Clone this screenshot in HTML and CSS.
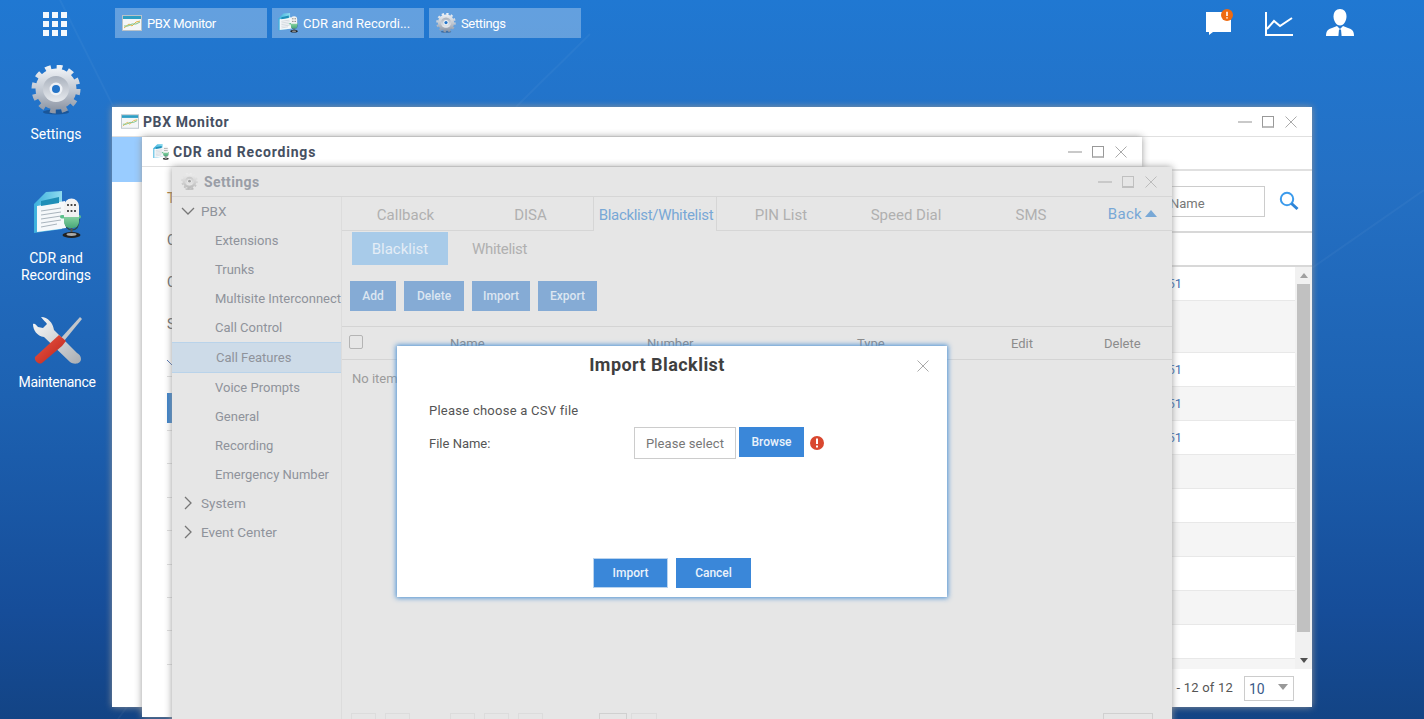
FILE: index.html
```html
<!DOCTYPE html>
<html lang="en">
<head>
<meta charset="utf-8">
<title>PBX Desktop</title>
<link rel="stylesheet" href="styles.css">
</head>
<body>
<svg class="defs" aria-hidden="true">
  <defs>
    <linearGradient id="steel" x1="0" y1="0" x2="0" y2="1"><stop offset="0" stop-color="#eef1f5"/><stop offset=".55" stop-color="#bfc6d0"/><stop offset="1" stop-color="#8f97a5"/></linearGradient>
    <linearGradient id="steelIn" x1="0" y1="0" x2="0" y2="1"><stop offset="0" stop-color="#a9b1bd"/><stop offset="1" stop-color="#e8ebef"/></linearGradient>
    <linearGradient id="mic" x1="0" y1="0" x2="0" y2="1"><stop offset="0" stop-color="#a5e6b4"/><stop offset="1" stop-color="#48a878"/></linearGradient>
    <linearGradient id="page" x1="0" y1="0" x2="1" y2="0"><stop offset="0" stop-color="#3cb0dc"/><stop offset="1" stop-color="#8fdcf0"/></linearGradient>
    <linearGradient id="metal" x1="0" y1="0" x2="1" y2="1"><stop offset="0" stop-color="#fafafa"/><stop offset="1" stop-color="#a9adb2"/></linearGradient>
    <linearGradient id="red" x1="0" y1="0" x2="1" y2="1"><stop offset="0" stop-color="#ee5a45"/><stop offset="1" stop-color="#b8201a"/></linearGradient>
    <symbol id="gear" viewBox="0 0 50 50">
      <ellipse cx="25" cy="47" rx="13" ry="2.5" fill="#10345f" opacity=".45"/>
      <circle cx="25" cy="24" r="22" fill="none" stroke="url(#steel)" stroke-width="5" stroke-dasharray="5.76 5.76"/>
      <circle cx="25" cy="24" r="20.5" fill="url(#steel)"/>
      <circle cx="25" cy="24" r="13" fill="url(#steelIn)"/>
      <circle cx="25" cy="24" r="6.5" fill="#eef1f5"/>
      <circle cx="25" cy="24" r="4" fill="#2474c8"/>
    </symbol>
    <symbol id="cdr" viewBox="0 0 48 48">
      <path d="M1 13 L13 1 L29 0 L29 38 L1 42Z" fill="url(#page)"/>
      <path d="M4 15 L32 10 L33 37 L4 41Z" fill="#f5f8fa"/>
      <path d="M8 10 L26 6 L26 12 L8 15Z" fill="#1f8fb8"/>
      <path d="M8 20 L28 17 M8 24 L28 21 M8 28 L28 25 M8 32 L28 29 M8 36 L24 33" stroke="#a9b4bd" stroke-width="1"/>
      <path d="M32 28 Q32 39 39 39 Q46 39 46 28" fill="none" stroke="#2c4a48" stroke-width="1.2"/>
      <rect x="27" y="24" width="5" height="3.500" rx="1.700" fill="#5cc08c"/><rect x="44" y="24" width="4" height="3.500" rx="1.700" fill="#5cc08c"/>
      <rect x="31" y="20" width="15" height="17" rx="6" fill="url(#mic)"/>
      <path d="M31 26 V15 a7.500 7.500 0 0 1 15 0 V26Z" fill="#f2f2f2"/>
      <path d="M35 13v2M38.500 13v2M42 13v2M35 19v2M38.500 19v2M42 19v2" stroke="#444" stroke-width="1.800"/>
      <path d="M38.500 37v4" stroke="#555" stroke-width="2"/>
      <ellipse cx="38.500" cy="44" rx="9" ry="3" fill="#222"/><ellipse cx="38.500" cy="43.500" rx="5" ry="1.400" fill="#aaa"/>
    </symbol>
    <symbol id="tools" viewBox="0 0 50 50">
      <path d="M1 8 C1 14 5 20 12 21 L38 46 C42 49 49 48 49 43 C49 40 47 38 45 37 L22 14 C21 7 16 1 9 1 C11 4 14 6 15 8 L11 12 L6 11 C4 9 3 7 1 8Z" fill="url(#metal)"/>
      <path d="M29 22 L48 1 L50 3 L32 25Z" fill="#c3c6ca"/>
      <path d="M27 19 L34 25 L30 30 L10 47 C7 49 2 45 3 41Z" fill="url(#red)"/>
    </symbol>
    <symbol id="monitor" viewBox="0 0 20 16">
      <rect x=".5" y=".5" width="19" height="15" fill="#f4f6f7" stroke="#b9c2c9"/>
      <rect x="1" y="1" width="18" height="3" fill="#2f9fc4"/>
      <path d="M2 13 L7 9 L10 11 L14 7 L18 6" fill="none" stroke="#e6b54a" stroke-width="1"/>
      <path d="M2 11 L6 11 L10 9 L14 9 L18 7" fill="none" stroke="#7cc48a" stroke-width="1"/>
    </symbol>
    <symbol id="winClose" viewBox="0 0 12 12"><path d="M.5.5l11 11M11.5.5l-11 11" stroke="currentColor" fill="none"/></symbol>
  </defs>
</svg>

<div class="desktop">
  <svg class="wallpaper" viewBox="0 0 1424 719" aria-hidden="true">
    <path d="M60 0 L116 112 M516 107 L590 34 M1312 268 L1424 190 M118 719 L132 700" stroke="#fff" stroke-opacity=".04" stroke-width="2" fill="none"/>
  </svg>

  <header class="topbar">
    <div class="launcher"><i></i><i></i><i></i><i></i><i></i><i></i><i></i><i></i><i></i></div>
    <nav class="tasks">
      <div class="task"><svg class="task-icon"><use href="#monitor"/></svg><span>PBX Monitor</span></div>
      <div class="task task-wide"><svg class="task-icon"><use href="#cdr"/></svg><span>CDR and Recordi...</span></div>
      <div class="task"><svg class="task-icon"><use href="#gear"/></svg><span>Settings</span></div>
    </nav>
    <div class="status-icons">
      <svg class="st-chat" viewBox="0 0 28 26">
        <path d="M1 3h25v20H8l-4 3v-3H1z" fill="#fff"/>
        <circle cx="22" cy="6" r="6" fill="#ef6a10"/>
        <path d="M22 2.800v4.200M22 8.200v1.400" stroke="#fff" stroke-width="1.600"/>
      </svg>
      <svg class="st-chart" viewBox="0 0 28 24">
        <path d="M1 0v23h27" fill="none" stroke="#fff" stroke-width="2"/>
        <path d="M2 17l7-8 6 5 12-8" fill="none" stroke="#fff" stroke-width="2"/>
      </svg>
      <svg class="st-user" viewBox="0 0 28 28">
        <path d="M14 0c4 0 6.500 3 6.500 7.500 0 4-2.500 9-6.500 9s-6.500-5-6.500-9C7.500 3 10 0 14 0z" fill="#fff"/>
        <path d="M0 27c0-5 2-7 6-8l5-2 3 3 3-3 5 2c4 1 6 3 6 8z" fill="#fff"/>
        <path d="M13 20.500h2l.6 6.500h-3.200z" fill="#2475c8"/>
      </svg>
    </div>
  </header>

  <aside class="shortcuts">
    <div class="shortcut sc-settings"><svg class="sc-gear"><use href="#gear"/></svg><span>Settings</span></div>
    <div class="shortcut sc-cdr"><svg class="sc-doc"><use href="#cdr"/></svg><span>CDR and<br>Recordings</span></div>
    <div class="shortcut sc-maint"><svg class="sc-tools"><use href="#tools"/></svg><span>Maintenance</span></div>
  </aside>

  <section class="window win-pbx">
    <div class="win-title">
      <svg class="title-icon"><use href="#monitor"/></svg>
      <h2>PBX Monitor</h2>
      <div class="win-controls"><b class="c-min"></b><b class="c-max"></b><svg class="c-close"><use href="#winClose"/></svg></div>
    </div>
    <div class="pbx-body">
      <div class="pbx-side"><div class="pbx-side-active"></div></div>
      <div class="pbx-main">
        <div class="pbx-tabs"></div>
        <div class="pbx-search">
          <div class="search-input">Name</div>
          <svg class="search-icon" viewBox="0 0 20 20"><circle cx="8" cy="8" r="6.200" fill="none" stroke="#3c9bec" stroke-width="2"/><path d="M12.500 12.500l6 5.500" stroke="#2d85d8" stroke-width="3"/></svg>
        </div>
        <div class="pbx-head"></div>
        <div class="pbx-table">
          <div class="pbx-rows">
            <div class="row">51</div><div class="row tall"></div><div class="row">51</div><div class="row">51</div><div class="row">51</div>
            <div class="row"></div><div class="row"></div><div class="row"></div><div class="row"></div><div class="row"></div><div class="row"></div><div class="row"></div>
          </div>
          <div class="scrollbar"><i class="arr-up"></i><div class="thumb"></div><i class="arr-down"></i></div>
        </div>
        <div class="pbx-foot"><span>- 12 of 12</span><div class="page-size">10<i></i></div></div>
      </div>
    </div>
  </section>

  <section class="window win-cdr">
    <div class="win-title">
      <svg class="title-icon"><use href="#cdr"/></svg>
      <h2>CDR and Recordings</h2>
      <div class="win-controls"><b class="c-min"></b><b class="c-max"></b><svg class="c-close"><use href="#winClose"/></svg></div>
    </div>
    <div class="cdr-strip">
      <div class="cdr-label first">T</div>
      <div class="cdr-label">C</div>
      <div class="cdr-label">C</div>
      <div class="cdr-label">S</div>
      <svg class="cdr-tick" viewBox="0 0 6 8"><path d="M0 1l5 5" stroke="#4a6fb0" fill="none"/></svg>
      <div class="cdr-rule"></div>
      <div class="cdr-blue"></div>
      <div class="cdr-lines"><i></i><i></i><i></i><i></i><i></i><i></i><i></i><i></i></div>
    </div>
  </section>

  <section class="window win-settings">
    <div class="win-title">
      <svg class="title-icon gear-dim"><use href="#gear"/></svg>
      <h2>Settings</h2>
      <div class="win-controls"><b class="c-min"></b><b class="c-max"></b><svg class="c-close"><use href="#winClose"/></svg></div>
    </div>
    <div class="set-body">
      <nav class="set-side">
        <div class="tree-head"><svg class="chev" viewBox="0 0 14 14"><path d="M1 4l6 6 6-6" fill="none" stroke="currentColor" stroke-width="1.300"/></svg>PBX</div>
        <div class="tree-item">Extensions</div>
        <div class="tree-item">Trunks</div>
        <div class="tree-item">Multisite Interconnect</div>
        <div class="tree-item">Call Control</div>
        <div class="tree-item active">Call Features</div>
        <div class="tree-item">Voice Prompts</div>
        <div class="tree-item">General</div>
        <div class="tree-item">Recording</div>
        <div class="tree-item">Emergency Number</div>
        <div class="tree-head"><svg class="chev" viewBox="0 0 14 14"><path d="M4 1l6 6-6 6" fill="none" stroke="currentColor" stroke-width="1.300"/></svg>System</div>
        <div class="tree-head"><svg class="chev" viewBox="0 0 14 14"><path d="M4 1l6 6-6 6" fill="none" stroke="currentColor" stroke-width="1.300"/></svg>Event Center</div>
      </nav>
      <div class="set-main">
        <div class="tabs">
          <div class="tab">Callback</div>
          <div class="tab">DISA</div>
          <div class="tab current">Blacklist/Whitelist</div>
          <div class="tab">PIN List</div>
          <div class="tab">Speed Dial</div>
          <div class="tab">SMS</div>
          <div class="back">Back<i></i></div>
        </div>
        <div class="subtabs"><div class="subtab on">Blacklist</div><div class="subtab off">Whitelist</div></div>
        <div class="toolbar">
          <div class="tbtn t-add">Add</div><div class="tbtn t-del">Delete</div><div class="tbtn t-imp">Import</div><div class="tbtn t-exp">Export</div>
        </div>
        <div class="thead">
          <i class="check"></i>
          <span class="th-name">Name</span><span class="th-number">Number</span><span class="th-type">Type</span><span class="th-edit">Edit</span><span class="th-del">Delete</span>
        </div>
        <div class="noitem">No item</div>
        <div class="pager">
          <i class="pg"></i><i class="pg gap1"></i><i class="pg gap2"></i><i class="pg gap1"></i><i class="pg gap1"></i><i class="pg wide gap3"></i><i class="pg wide gap4"></i><i class="pg big"></i>
        </div>
      </div>
    </div>
  </section>

  <section class="modal">
    <div class="modal-head"><h3>Import Blacklist</h3><svg class="modal-x"><use href="#winClose"/></svg></div>
    <div class="modal-body">
      <p>Please choose a CSV file</p>
      <div class="form-row">
        <label>File Name:</label>
        <div class="file-input">Please select</div>
        <div class="btn browse">Browse</div>
        <svg class="err" viewBox="0 0 14 14"><circle cx="7" cy="7" r="7" fill="#d9472f"/><path d="M7 2.500v5.500M7 9.500v2" stroke="#fff" stroke-width="2"/></svg>
      </div>
    </div>
    <div class="modal-foot"><div class="btn primary">Import</div><div class="btn">Cancel</div></div>
  </section>
</div>
</body>
</html>
```

FILE: styles.css
```css
* { box-sizing: border-box; }
html, body { margin: 0; height: 100%; overflow: hidden; }
body { font-family: Roboto, "Liberation Sans", sans-serif; font-size: 13px; color: #555; }
.defs { position: absolute; width: 0; height: 0; }
i, b { display: block; }

.desktop { position: relative; width: 1424px; height: 719px; overflow: hidden;
  background: linear-gradient(180deg, #2078d2 0%, #2470c4 25%, #1d62b2 55%, #164d99 85%, #134485 100%); }
.wallpaper { position: absolute; inset: 0; width: 100%; height: 100%; }

.topbar { position: absolute; left: 0; top: 0; width: 100%; height: 46px; }
.launcher { position: absolute; left: 43px; top: 12px; width: 24px; height: 24px; display: grid; grid-template-columns: repeat(3, 6px); grid-template-rows: repeat(3, 6px); gap: 3px; }
.launcher i { background: #fff; opacity: .95; }
.tasks { position: absolute; left: 115px; top: 8px; display: flex; gap: 5px; }
.task { width: 152px; height: 30px; background: rgba(255,255,255,.3); display: flex; align-items: center; padding-left: 7px; color: #fff; font-size: 13px; letter-spacing: -.35px; }
.task-wide { letter-spacing: 0; padding-left: 6px; }
.task-wide .task-icon { margin-right: 5px; }
.task-icon { width: 20px; height: 20px; margin-right: 5px; flex: none; }
.status-icons { position: absolute; inset: 0; }
.st-chat { position: absolute; left: 1205px; top: 9px; width: 28px; height: 26px; }
.st-chart { position: absolute; left: 1265px; top: 12px; width: 28px; height: 24px; }
.st-user { position: absolute; left: 1326px; top: 9px; width: 28px; height: 28px; }

.shortcuts { position: absolute; left: 0; top: 0; }
.shortcut { position: absolute; left: 6px; width: 100px; color: #fff; font-size: 14px; line-height: 17px; text-align: center; display: flex; flex-direction: column; align-items: center; }
.sc-settings { top: 65px; }
.sc-settings svg { width: 50px; height: 50px; margin-bottom: 11px; margin-left: -1px; }
.sc-cdr { top: 191px; }
.sc-cdr svg { width: 48px; height: 48px; margin-bottom: 11px; margin-left: 1px; }
.sc-maint { top: 316px; left: 7px; letter-spacing: -.35px; }
.sc-maint svg { width: 50px; height: 50px; margin-bottom: 8px; }

.window { position: absolute; background: #fff; box-shadow: 0 0 7px rgba(150,150,150,.95); display: flex; flex-direction: column; }
.win-pbx { left: 112px; top: 107px; width: 1200px; height: 600px; }
.win-cdr { left: 142px; top: 137px; width: 1000px; height: 580px; }
.win-settings { left: 172px; top: 167px; width: 1000px; height: 600px; background: #e6e6e6; }

.win-title { height: 30px; flex: none; display: flex; align-items: center; padding-left: 9px; border-bottom: 1px solid #e0e0e0; color: #8c8c8c; }
.win-title h2 { margin: 0; font-size: 14px; font-weight: 700; color: #465062; letter-spacing: .6px; }
.title-icon { width: 18px; height: 15px; margin-right: 4px; flex: none; }
.win-cdr .title-icon { width: 16px; height: 16px; margin-right: 4px; margin-left: 2px; }
.win-cdr h2 { letter-spacing: .8px; }
.win-controls { margin-left: auto; width: 60px; margin-right: 14px; height: 12px; display: flex; align-items: center; }
.c-min { width: 14px; height: 2px; background: #c9c9c9; }
.c-max { width: 12px; height: 12px; border: 1px solid #999; border-bottom-width: 2px; border-bottom-color: #bbb; margin-left: 10px; }
.c-close { width: 12px; height: 12px; margin-left: 11px; color: #aaa; }
.win-settings .c-max { border-color: #c0c0c0; }
.win-settings .c-close { color: #bcbcbc; }

/* PBX monitor */
.pbx-body { flex: 1; display: flex; min-height: 0; }
.pbx-side { width: 30px; flex: none; }
.pbx-side-active { height: 45px; background: #99ccff; }
.pbx-main { flex: 1; display: flex; flex-direction: column; min-width: 0; }
.pbx-tabs { height: 34px; border-bottom: 2px solid #e0e0e0; flex: none; }
.pbx-search { height: 62px; flex: none; border-bottom: 2px solid #d8d8d8; display: flex; align-items: center; justify-content: flex-end; padding-right: 13px; }
.search-input { width: 220px; height: 31px; border: 1px solid #ccc; padding-left: 124px; line-height: 34px; color: #777; font-size: 13px; }
.search-icon { width: 20px; height: 20px; margin-left: 14px; }
.pbx-head { height: 34px; flex: none; border-bottom: 2px solid #d8d8d8; }
.pbx-table { height: 402px; flex: none; display: flex; overflow: hidden; }
.pbx-rows { flex: 1; min-width: 0; }
.row { height: 34px; border-bottom: 1px solid #e8e8e8; text-align: right; padding-right: 113px; line-height: 34px; color: #3f6fae; font-size: 13px; }
.row.tall { height: 52px; }
.row:nth-child(even) { background: #f5f5f5; }
.scrollbar { width: 17px; flex: none; background: #f1f1f1; display: flex; flex-direction: column; align-items: center; position: relative; padding-top: 17px; }
.thumb { width: 13px; height: 348px; background: #c1c1c1; }
.arr-up { position: absolute; top: 6px; width: 0; height: 0; border: 4px solid transparent; border-top: 0; border-bottom: 5px solid #a0a0a0; }
.arr-down { position: absolute; bottom: 6px; width: 0; height: 0; border: 4px solid transparent; border-bottom: 0; border-top: 5px solid #505050; }
.pbx-foot { flex: 1; display: flex; align-items: center; justify-content: flex-end; padding-right: 18px; color: #555; font-size: 13px; }
.pbx-foot span { margin-bottom: 1px; letter-spacing: .2px; }
.page-size { width: 50px; height: 25px; border: 1px solid #ccc; margin-left: 11px; padding-left: 4px; position: relative; line-height: 25px; font-size: 14px; color: #3a5a8a; }
.page-size i { position: absolute; right: 5px; top: 7px; border: 5px solid transparent; border-top: 6px solid #999; border-bottom: 0; }

/* CDR strip */
.cdr-strip { flex: 1; padding-left: 25px; color: #555; font-size: 14px; position: relative; }
.cdr-label { height: 42px; line-height: 42px; color: #666; }
.cdr-label.first { color: #a87a3a; margin-top: 10px; }
.cdr-tick { display: block; width: 6px; height: 8px; margin-top: 14px; }
.cdr-rule { height: 1px; background: #ddd; margin-top: 9px; }
.cdr-blue { height: 30px; background: #3a80c8; margin-top: 16px; }
.cdr-lines i { height: 33.400px; border-top: 1px solid #ddd; }
.cdr-lines { margin-top: 7px; }

/* Settings */
.gear-dim { width: 17px; height: 17px; margin-right: 6px; opacity: .55; filter: grayscale(1); }
.win-settings .win-title { border-bottom: 1px solid #d6d6d6; }
.win-settings .win-title h2 { color: #9a9ea6; font-size: 14px; letter-spacing: .4px; }
.set-body { flex: 1; display: flex; min-height: 0; }
.set-side { width: 170px; flex: none; border-right: 1px solid #dcdcdc; color: #8f939b; font-size: 13px; }
.tree-head { height: 29px; display: flex; align-items: center; padding-left: 9px; padding-bottom: 2px; font-size: 13.500px; }
.chev { width: 14px; height: 14px; margin-right: 6px; color: #777; }
.tree-item { height: 29px; line-height: 29px; padding-left: 43px; white-space: nowrap; }
.tree-item.active { height: 31px; line-height: 30px; padding-left: 44px; background: #cddbe8; border-top: 1px solid #b9d3ea; border-bottom: 1px solid #b9d3ea; }
.set-main { flex: 1; display: flex; flex-direction: column; min-width: 0; position: relative; }
.tabs { height: 34px; flex: none; display: flex; padding-left: 1px; border-bottom: 1px solid #d6d6d6; font-size: 15px; color: #b0b0b0; position: relative; }
.tab { width: 125px; text-align: center; line-height: 36px; white-space: nowrap; }
.tab.current { width: 124px; margin-right: 1.500px; padding-left: 2px; color: #78a8d6; background: #e6e6e6; border-left: 1px solid #d6d6d6; border-right: 1px solid #d6d6d6; height: 34px; letter-spacing: -.33px; }
.back { margin-left: auto; margin-right: 15px; line-height: 36px; letter-spacing: .3px; color: #78a8d6; display: flex; align-items: center; }
.back i { margin-left: 3px; border: 6.500px solid transparent; border-top: 0; border-bottom: 7px solid #78a8d6; }
.subtabs { flex: none; display: flex; height: 33px; margin-top: 1px; padding-left: 10px; font-size: 15px; color: #b0b0b0; }
.subtab { width: 96px; line-height: 35px; text-align: center; margin-right: 3.500px; }
.subtab.off { letter-spacing: -.35px; }
.subtab.on { background: #a8cbe9; color: #e4edf6; }
.toolbar { flex: none; display: flex; gap: 8px; padding: 16px 0 15px 8px; height: 61px; }
.tbtn { height: 30px; background: #85abd5; color: #dce6f1; font-size: 12px; line-height: 30px; text-align: center; font-weight: 500; }
.t-add { width: 46px; } .t-del { width: 60px; } .t-imp { width: 58px; } .t-exp { width: 59px; }
.thead { flex: none; height: 34px; border-top: 1px solid #d4d4d4; border-bottom: 1px solid #d4d4d4; position: relative; color: #8c8c8c; font-size: 13px; line-height: 34px; display: flex; }
.check { position: absolute; left: 7px; top: 8px; width: 14px; height: 14px; border: 1px solid #b4b4b4; border-radius: 2px; }
.thead span { position: absolute; top: 0; }
.th-name { left: 108px; } .th-number { left: 305px; } .th-type { left: 515px; } .th-edit { left: 669px; } .th-del { left: 762px; }
.noitem { padding: 11px 0 0 10px; color: #9c9c9c; font-size: 13px; }
.pager { position: absolute; left: 9px; top: 516px; display: flex; }
.pg { width: 25px; height: 24px; border: 1px solid #dcdcdc; }
.gap1 { margin-left: 9px; } .gap2 { margin-left: 40px; } .gap3 { margin-left: 56px; width: 28px; border-color: #d0d0d0; } .gap4 { margin-left: 4px; width: 26px; }
.big { width: 50px; margin-left: 446px; border-color: #d0d0d0; }

/* Modal */
.modal { position: absolute; left: 397px; top: 346px; width: 550px; height: 251px; background: #fff; box-shadow: 0 0 5px 1px #4a90d4; display: flex; flex-direction: column; color: #555; }
.modal-head { height: 38px; flex: none; position: relative; text-align: center; padding-right: 30px; }
.modal-head h3 { margin: 0; font-size: 18px; font-weight: 700; line-height: 38px; color: #3f3f3f; letter-spacing: .45px; }
.modal-x { position: absolute; right: 18px; top: 14px; width: 12px; height: 12px; color: #aaa; }
.modal-body { flex: 1; padding: 18px 0 0 32px; }
.modal-body p { margin: 0 0 8px; line-height: 17px; font-size: 13px; letter-spacing: .25px; }
.form-row { display: flex; align-items: center; height: 32px; }
.form-row label { width: 205px; font-size: 13px; }
.file-input { width: 102px; height: 32px; border: 1px solid #ccc; text-align: center; line-height: 32px; color: #777; font-size: 13px; letter-spacing: .1px; }
.btn { width: 75px; height: 30px; background: #3a87d9; color: #e9f2fb; font-size: 12px; font-weight: 500; text-align: center; line-height: 30px; }
.browse { width: 65px; margin-left: 3px; margin-top: -2px; line-height: 30px; }
.err { width: 14px; height: 14px; margin-left: 6px; }
.modal-foot { flex: none; height: 39px; display: flex; justify-content: center; gap: 8px; }
.primary { box-shadow: inset 0 0 0 1px #b9d3ee; }
```
